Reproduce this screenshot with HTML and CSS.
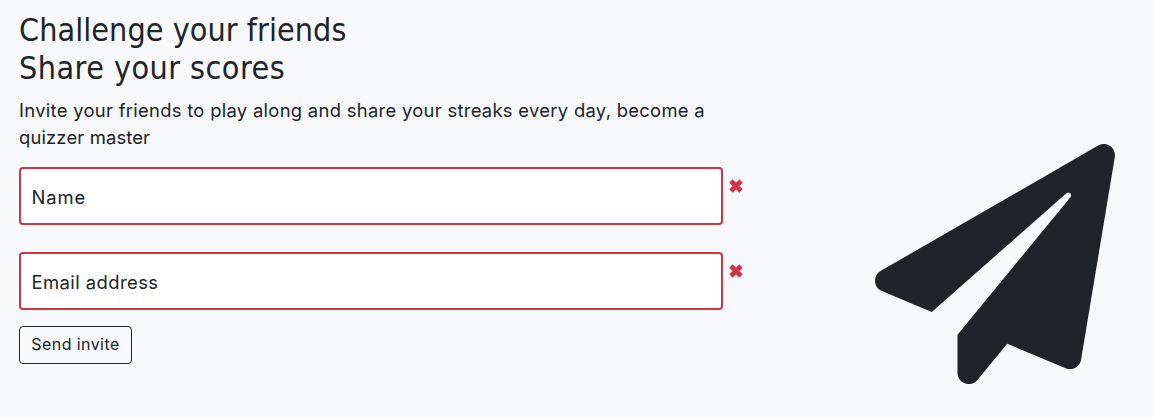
FILE: index.html
```html
<!DOCTYPE html>
<html lang="en">
<head>
<meta charset="utf-8">
<title>Challenge your friends</title>
<link rel="stylesheet" href="styles.css">
</head>
<body>
<main class="invite">
  <section class="content">
    <h2 class="title"><span class="title-first">Challenge your friends</span><br><span class="title-second">Share your scores</span></h2>
    <p class="lead"><span class="lead-first">Invite your friends to play along and share your streaks every day, become a</span><br><span class="lead-second">quizzer master</span></p>
    <form class="form">
      <div class="row">
        <div class="field"><span class="name">Name</span></div>
        <svg class="cross" viewBox="0 0 14 14"><path d="M2 2L12 12M12 2L2 12"/></svg>
      </div>
      <div class="row">
        <div class="field"><span class="email">Email address</span></div>
        <svg class="cross" viewBox="0 0 14 14"><path d="M2 2L12 12M12 2L2 12"/></svg>
      </div>
      <button class="send" type="button">Send invite</button>
    </form>
  </section>
  <svg class="plane" viewBox="0 0 512 512"><path d="M476 3.2L12.5 270.6c-18.1 10.4-15.8 35.6 2.2 43.2L121 358.4l287.3-253.2c5.5-4.9 13.3 2.6 8.6 8.3L176 407v80.5c0 23.6 28.5 32.9 42.5 15.8L282 426l124.6 52.2c14.2 6 30.4-2.9 33-18.2l72-432C515 7.8 493.3-6.8 476 3.2z"/></svg>
</main>
</body>
</html>
```
FILE: styles.css
```css
* { box-sizing: border-box; }
body {
  margin: 0;
  background: #f7f8fa;
  color: #202327;
  font-family: Inter, "Noto Sans", sans-serif;
}
.invite {
  display: flex;
  justify-content: space-between;
  height: 417px;
  padding: 11px 38px 0 19px;
}
.content { width: 724px; }
.title {
  height: 77px;
  margin: 0 0 9px;
  font: 400 32px/38.4px "DejaVu Sans Condensed", "DejaVu Sans", sans-serif;
  font-stretch: condensed;
  white-space: nowrap;
}
.title-first { letter-spacing: 0.06px; }
.title-second { letter-spacing: 0.46px; }
.lead {
  height: 54px;
  margin: 0 0 16px;
  font-size: 18.4px;
  line-height: 27px;
  white-space: nowrap;
}
.lead-first { letter-spacing: 0.3px; }
.lead-second { letter-spacing: 0.15px; }
.form { display: flex; flex-direction: column; align-items: flex-start; }
.row { display: flex; gap: 6px; margin-bottom: 27px; }
.row + .row { margin-bottom: 16px; }
.field {
  width: 704px;
  height: 58px;
  padding: 14px 10.5px 0;
  border: 2px solid #d23446;
  border-radius: 4px;
  background: #fff;
  font-size: 18.4px;
  line-height: 28px;
}
.name { letter-spacing: 0.9px; }
.email { letter-spacing: 0.45px; }
.cross { width: 14px; height: 14px; margin-top: 12px; margin-left: -0.5px; stroke: #d23446; stroke-width: 4.8; }
.send {
  width: 113px;
  height: 38px;
  padding: 0 0 2px;
  border: 1px solid #202327;
  border-radius: 4px;
  background: transparent;
  color: #202327;
  font: 400 16px/24px Inter, "Noto Sans", sans-serif;
  letter-spacing: 0.42px;
  white-space: nowrap;
}
.plane { width: 240px; height: 240px; margin-top: 133px; fill: #202327; }
```
